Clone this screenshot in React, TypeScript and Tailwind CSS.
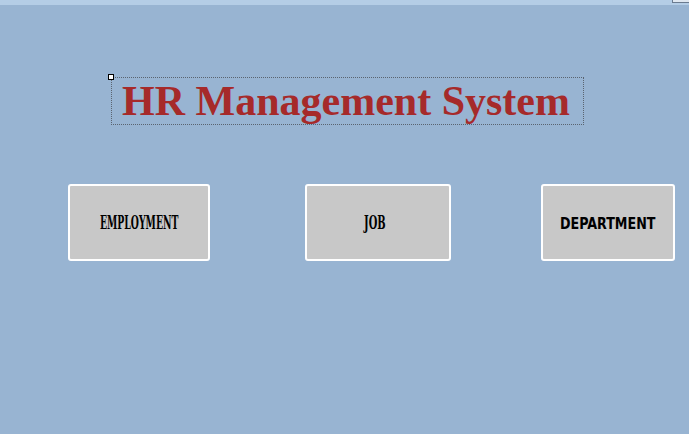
export default function App() {
  const buttons = [
    { label: "EMPLOYMENT", ml: "ml-[68px]", w: "w-[142px]", text: "scale-x-[0.49] font-['DejaVu_Serif',serif] text-[19px]" },
    { label: "JOB", ml: "ml-[95px]", w: "w-[146px]", text: "scale-x-[0.52] font-['DejaVu_Serif',serif] text-[19px] -ml-[6px]" },
    { label: "DEPARTMENT", ml: "ml-[90px]", w: "w-[134px]", text: "scale-x-[0.94] font-['DejaVu_Sans_Condensed','DejaVu_Sans',sans-serif] text-[15px] mt-[3px]" },
  ];

  return (
    <div className="relative w-[689px] h-[434px] bg-[#98b4d2] overflow-hidden">
      {/* top strip */}
      <div className="h-[5px] bg-[#b4cde6]" />
      <div className="absolute right-0 top-0 w-[17px] h-[3px] border-l border-b border-[#6b7b8f] bg-[#dfe7f0]" />

      {/* title */}
      <div className="relative ml-[111px] mt-[72px] w-[473px] h-[48px] border border-dotted border-[#5a6470] flex items-center justify-center">
        <div className="absolute -left-[4px] -top-[4px] w-[6px] h-[6px] bg-white border border-black" />
        <span className="whitespace-nowrap font-['Liberation_Serif',serif] font-bold text-[42px] leading-none text-[#a62a2a] -ml-[3px]">
          HR Management System
        </span>
      </div>

      {/* buttons */}
      <div className="flex mt-[59px]">
        {buttons.map((b) => (
          <div
            key={b.label}
            className={`${b.ml} ${b.w} h-[77px] bg-[#c8c8c8] border-2 border-white rounded-[3px] flex items-center justify-center`}
          >
            <span className={`inline-block whitespace-nowrap font-bold leading-none text-black ${b.text}`}>
              {b.label}
            </span>
          </div>
        ))}
      </div>
    </div>
  );
}
